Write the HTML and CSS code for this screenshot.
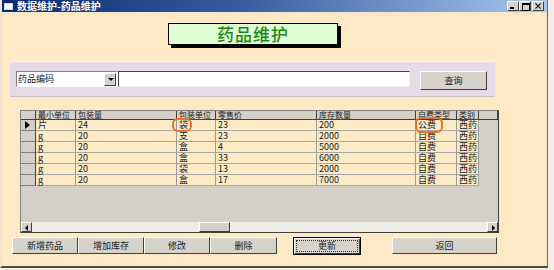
FILE: index.html
```html
<!DOCTYPE html>
<html lang="zh-CN">
<head>
    <meta charset="UTF-8">
    <title>数据维护-药品维护</title>
    <link rel="stylesheet" href="styles.css">
</head>
<body>
    <div class="window">
        <div class="titlebar">
            <span class="app-icon"></span>
            <span class="title">数据维护-药品维护</span>
            <div class="controls">
                <span class="ctl ctl-min"></span>
                <span class="ctl ctl-max"></span>
                <span class="ctl ctl-close">×</span>
            </div>
        </div>
        <div class="client">
            <div class="heading-row">
                <div class="heading">药品维护</div>
            </div>

            <div class="search-panel">
                <div class="select">
                    <span class="select-text">药品编码</span>
                    <span class="select-arrow"></span>
                </div>
                <div class="text-input"></div>
                <button class="btn btn-query">查询</button>
            </div>

            <div class="grid">
                <div class="row head">
                    <span class="ind"></span>
                    <span>最小单位</span>
                    <span>包装量</span>
                    <span>包装单位</span>
                    <span>零售价</span>
                    <span>库存数量</span>
                    <span>自费类型</span>
                    <span>类别</span>
                    <span class="rest"></span>
                </div>
                <div class="row">
                    <span class="ind"><i class="pointer"></i></span>
                    <span>片</span><span>24</span><span>袋</span><span>23</span><span>200</span><span>公费</span><span>西药</span><span class="rest"></span>
                </div>
                <div class="row">
                    <span class="ind"></span>
                    <span>g</span><span>20</span><span>支</span><span>23</span><span>2000</span><span>自费</span><span>西药</span><span class="rest"></span>
                </div>
                <div class="row">
                    <span class="ind"></span>
                    <span>g</span><span>20</span><span>盒</span><span>4</span><span>5000</span><span>自费</span><span>西药</span><span class="rest"></span>
                </div>
                <div class="row">
                    <span class="ind"></span>
                    <span>g</span><span>20</span><span>盒</span><span>33</span><span>6000</span><span>自费</span><span>西药</span><span class="rest"></span>
                </div>
                <div class="row">
                    <span class="ind"></span>
                    <span>g</span><span>20</span><span>袋</span><span>13</span><span>2000</span><span>自费</span><span>西药</span><span class="rest"></span>
                </div>
                <div class="row">
                    <span class="ind"></span>
                    <span>g</span><span>20</span><span>盒</span><span>17</span><span>7000</span><span>自费</span><span>西药</span><span class="rest"></span>
                </div>
                <div class="grid-empty"></div>
                <div class="hscroll">
                    <span class="sb-btn"><i class="tri-left"></i></span>
                    <div class="sb-track">
                        <span class="sb-thumb"></span>
                    </div>
                    <span class="sb-btn"><i class="tri-right"></i></span>
                </div>

                <span class="mark mark-unit"></span>
                <span class="mark mark-type"></span>
            </div>

            <div class="actions">
                <div class="btn-group">
                    <button class="btn">新增药品</button>
                    <button class="btn">增加库存</button>
                    <button class="btn">修改</button>
                    <button class="btn">删除</button>
                </div>
                <button class="btn btn-update"><span>更新</span></button>
                <button class="btn btn-back">返回</button>
            </div>
        </div>
    </div>
</body>
</html>
```

FILE: styles.css
```css
* {
    margin: 0;
    padding: 0;
    box-sizing: border-box;
    font-family: "Noto Sans CJK SC", "Liberation Sans", sans-serif;
}

body {
    background: #f3efe6;
    width: 554px;
    height: 270px;
    overflow: hidden;
}

.window {
    width: 548px;
    height: 268px;
    background: #fde9c4;
    border-left: 2px solid #efe3cf;
    border-right: 1px solid #6a6a6a;
    border-bottom: 2px solid #4a4a4a;
    display: flex;
    flex-direction: column;
}

/* title bar */
.titlebar {
    height: 14px;
    background: linear-gradient(to right, #0c2a6e, #3a5ea0 45%, #a8c8ee);
    display: flex;
    align-items: center;
    padding-left: 2px;
    border-bottom: 2px solid #f3e7d0;
}

.app-icon {
    width: 9px;
    height: 7px;
    background: #fff;
    border: 1px solid #cfd8ea;
    margin-right: 4px;
}

.title {
    color: #fff;
    font-size: 10px;
    font-weight: bold;
    line-height: 14px;
}

.controls {
    margin-left: auto;
    margin-right: 3px;
    display: flex;
}

.ctl {
    width: 12px;
    height: 10px;
    background: #d8d4cc;
    border: 1px solid;
    border-color: #fff #404040 #404040 #fff;
    position: relative;
    font-size: 9px;
    line-height: 8px;
    text-align: center;
    color: #000;
}

.ctl-close {
    margin-left: 1px;
    font-weight: bold;
}

.ctl-min::after {
    content: "";
    position: absolute;
    left: 2px;
    bottom: 1px;
    width: 4px;
    height: 2px;
    background: #000;
}

.ctl-max::after {
    content: "";
    position: absolute;
    left: 2px;
    top: 1px;
    width: 6px;
    height: 5px;
    border: 1px solid #000;
    border-top-width: 2px;
}

/* client */
.client {
    flex: 1;
    display: flex;
    flex-direction: column;
}

.heading-row {
    margin-top: 9px;
    padding-left: 166px;
}

.heading {
    width: 170px;
    height: 22px;
    background: #e1fdd4;
    border: 1px solid #000;
    box-shadow: 3px 3px 0 #000;
    color: #1b8a1b;
    font-size: 17px;
    font-weight: 500;
    line-height: 19px;
    text-align: center;
    letter-spacing: 1px;
}

.search-panel {
    margin-top: 16px;
    margin-left: 8px;
    width: 485px;
    height: 36px;
    background: #e6dbe6;
    border-top: 1px solid #f7f3f7;
    border-bottom: 1px solid #c9bcc9;
    display: flex;
    align-items: flex-start;
    padding: 9px 0 0 6px;
}

.select {
    width: 102px;
    height: 16px;
    background: #fff;
    border: 1px solid;
    border-color: #808080 #fff #fff #808080;
    display: flex;
    align-items: center;
}

.select-text {
    font-size: 9px;
    line-height: 14px;
    padding-left: 1px;
    flex: 1;
    color: #222;
}

.select-arrow {
    width: 12px;
    height: 13px;
    margin-right: 1px;
    background: #d4d0c8;
    border: 1px solid;
    border-color: #fff #404040 #404040 #fff;
    position: relative;
}

.select-arrow::after {
    content: "";
    position: absolute;
    left: 3px;
    top: 4px;
    border-left: 3px solid transparent;
    border-right: 3px solid transparent;
    border-top: 3px solid #000;
}

.text-input {
    width: 292px;
    height: 16px;
    background: #fff;
    border: 1px solid;
    border-color: #404040 #f0f0f0 #f0f0f0 #404040;
}

.btn {
    background: #d6d2cc;
    border: 1px solid;
    border-color: #fff #404040 #404040 #fff;
    font-size: 9px;
    color: #222;
    line-height: 13px;
}

.btn-query {
    width: 67px;
    height: 19px;
    margin-left: 10px;
}

/* data grid */
.grid {
    position: relative;
    margin-top: 13px;
    margin-left: 18px;
    width: 479px;
    height: 123px;
    background: #d4d0c8;
    border: 1px solid;
    border-color: #808080 #404040 #404040 #808080;
    display: flex;
    flex-direction: column;
}

.row {
    display: grid;
    grid-template-columns: 15px 40px 101px 39px 101px 99px 41px 22px 1fr;
    height: 11px;
}

.row span {
    display: block;
    background: #fdebc6;
    border-right: 1px solid #9a9a9a;
    border-bottom: 1px solid #a8a8a8;
    font-size: 9px;
    line-height: 10px;
    padding-left: 2px;
    color: #1a1a1a;
    white-space: nowrap;
}

.row .ind {
    background: #d4d0c8;
    border-right: 1px solid #404040;
    border-bottom: 1px solid #808080;
    position: relative;
}

.row .rest {
    background: #d4d0c8;
    border: none;
}

.row.head {
    height: 9px;
}

.row.head span {
    background: #d4d0c8;
    border-right: 1px solid #404040;
    border-bottom: 1px solid #404040;
    font-size: 8px;
    line-height: 8px;
}

.row.head .rest {
    border-bottom: 1px solid #404040;
}

.pointer {
    position: absolute;
    left: 4px;
    top: 1px;
    border-top: 4px solid transparent;
    border-bottom: 4px solid transparent;
    border-left: 5px solid #000;
}

.grid-empty {
    flex: 1;
}

.hscroll {
    height: 10px;
    display: flex;
}

.sb-btn {
    width: 11px;
    height: 10px;
    background: #d4d0c8;
    border: 1px solid;
    border-color: #fff #404040 #404040 #fff;
    position: relative;
}

.tri-left {
    position: absolute;
    left: 3px;
    top: 2px;
    border-top: 3px solid transparent;
    border-bottom: 3px solid transparent;
    border-right: 3px solid #000;
}

.tri-right {
    position: absolute;
    left: 4px;
    top: 2px;
    border-top: 3px solid transparent;
    border-bottom: 3px solid transparent;
    border-left: 3px solid #000;
}

.sb-track {
    flex: 1;
    background: #efede8;
    padding-left: 167px;
}

.sb-thumb {
    display: block;
    width: 31px;
    height: 10px;
    background: #d4d0c8;
    border: 1px solid;
    border-color: #fff #404040 #404040 #fff;
}

.mark {
    position: absolute;
    border: 2px solid #f07224;
    border-radius: 6px;
}

.mark-unit {
    left: 151px;
    top: 7px;
    width: 20px;
    height: 14px;
}

.mark-type {
    left: 394px;
    top: 6px;
    width: 28px;
    height: 16px;
}

/* bottom buttons */
.actions {
    margin-top: 4px;
    margin-left: 10px;
    display: flex;
    align-items: flex-start;
}

.btn-group {
    display: flex;
}

.btn-group .btn {
    width: 66px;
    height: 17px;
}

.btn-group .btn:last-child {
    width: 67px;
}

.btn-update {
    margin-left: 16px;
    width: 68px;
    height: 18px;
    border: 1px solid #000;
    box-shadow: inset 1px 1px 0 #fff, inset -1px -1px 0 #404040;
    padding: 2px;
}

.btn-update span {
    display: block;
    border: 1px dotted #333;
    line-height: 10px;
}

.btn-back {
    margin-left: 31px;
    width: 105px;
    height: 17px;
}
```
